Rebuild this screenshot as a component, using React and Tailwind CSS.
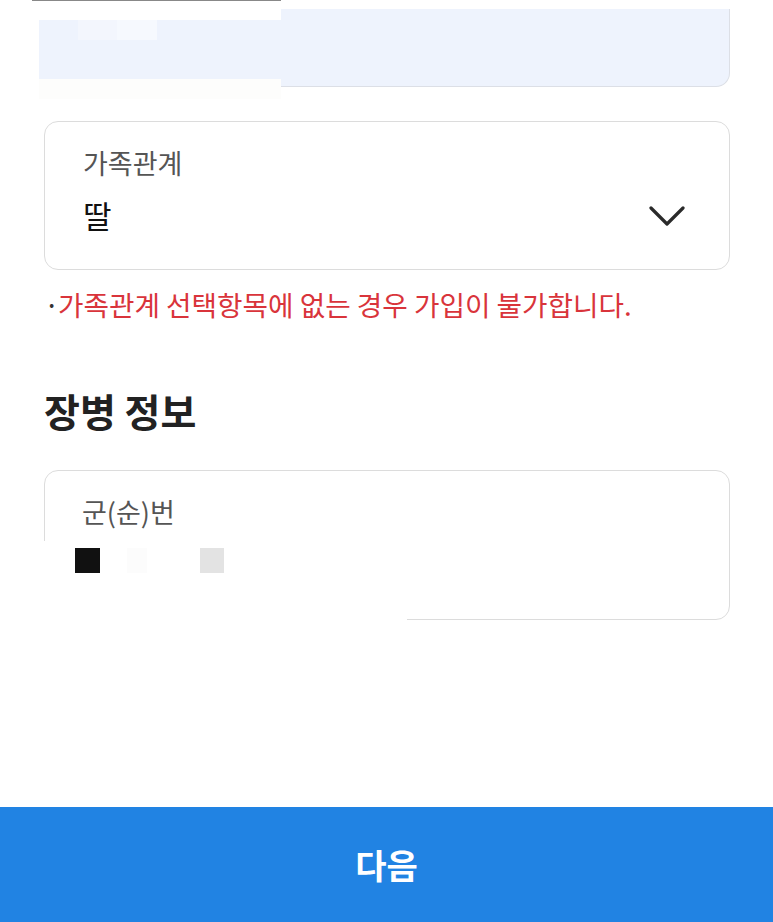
import React from "react";

const font = { fontFamily: '"Noto Sans CJK KR", "Noto Sans", sans-serif' };

export default function App() {
  return (
    <div className="relative w-[773px] h-[922px] bg-white overflow-hidden" style={font}>
      <div className="flex flex-col px-[44px] pr-[43px]">
        {/* top (blurred) input */}
        <div className="mt-[9px] h-[78px] rounded-b-[14px] bg-[#eef3fd] border border-t-0 border-[#dcdfe6]" />

        {/* 가족관계 select */}
        <div className="mt-[34px] h-[149px] rounded-[14px] border border-[#dcdcdc] flex justify-between pl-[38px] pr-[44px] pt-[23px]">
          <div className="flex flex-col">
            <span className="text-[27px] leading-[36px] text-[#555]">가족관계</span>
            <span className="text-[31px] leading-[40px] mt-[14px] text-[#111]">딸</span>
          </div>
          <svg width="36" height="22" viewBox="0 0 36 22" className="mt-[60px]">
            <path d="M2 3 L18 19 L34 3" fill="none" stroke="#2a2a2a" strokeWidth="3.2" strokeLinecap="round" strokeLinejoin="round" />
          </svg>
        </div>

        {/* notice */}
        <div className="mt-[16px] flex items-center text-[27.7px] leading-[36px]">
          <span className="text-[#333] w-[14px]">·</span>
          <span className="text-[#d9343b]">가족관계 선택항목에 없는 경우 가입이 불가합니다.</span>
        </div>

        {/* heading */}
        <h2 className="mt-[64px] text-[39px] leading-[48px] font-bold text-[#222]">장병 정보</h2>

        {/* 군(순)번 */}
        <div className="mt-[36px] h-[150px] rounded-[14px] border border-[#dcdcdc] pl-[37px] pt-[23px]">
          <span className="text-[27px] leading-[36px] text-[#555]">군(순)번</span>
        </div>
      </div>

      {/* redaction patch top */}
      <div className="absolute left-[26px] top-0 w-[255px] h-[120px] bg-white">
        <div className="ml-[6px] h-[1px] bg-[#888]" />
        <div className="ml-[13px] mt-[19px] h-[59px] bg-[#eef3fd] relative">
          <div className="absolute left-[39px] top-0 w-[40px] h-[20px] bg-[#f3f6fd]" />
          <div className="absolute left-[78px] top-0 w-[40px] h-[20px] bg-[#f6f9fe]" />
        </div>
        <div className="ml-[13px] h-[20px] bg-[#fdfdfc]" />
      </div>

      {/* redaction patch bottom */}
      <div className="absolute left-[42px] top-[541px] w-[365px] h-[82px] bg-white">
        <div className="absolute left-[33px] top-[7px] w-[25px] h-[25px] bg-[#111]" />
        <div className="absolute left-[85px] top-[7px] w-[20px] h-[25px] bg-[#fcfcfc]" />
        <div className="absolute left-[158px] top-[7px] w-[24px] h-[25px] bg-[#e3e3e3]" />
      </div>

      {/* bottom button */}
      <button className="absolute left-0 bottom-0 w-full h-[115px] bg-[#2183e3] flex items-center justify-center">
        <span className="text-white text-[34px] font-bold leading-none">다음</span>
      </button>
    </div>
  );
}
